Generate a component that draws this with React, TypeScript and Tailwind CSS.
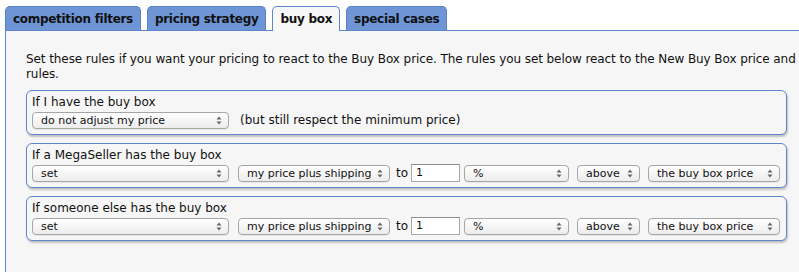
import { ReactNode } from 'react';

const font = { fontFamily: '"DejaVu Sans", Verdana, sans-serif' };

function Arrows() {
  return (
    <svg width="6" height="9" viewBox="0 0 6 9" className="shrink-0">
      <path d="M3 0.5 L5.5 3.5 L0.5 3.5 Z" fill="#666" />
      <path d="M3 8.5 L5.5 5.5 L0.5 5.5 Z" fill="#666" />
    </svg>
  );
}

function Select({ value, width }: { value: string; width: string }) {
  return (
    <div
      className={`${width} h-[17px] shrink-0 flex items-center justify-between pl-[8px] pr-[6px] rounded-[4px] border border-[#a6a6a6] bg-gradient-to-b from-white to-[#ececec] text-[11px] leading-[15px] text-[#111] shadow-[0_1px_0_rgba(0,0,0,0.06)]`}
    >
      <span>{value}</span>
      <Arrows />
    </div>
  );
}

function RuleBox({ title, children }: { title: string; children: ReactNode }) {
  return (
    <div className="w-[761px] rounded-[6px] border border-[#5f85cb] bg-[#f6f6f6] pt-[4px] pb-[5px] pl-[5px] pr-[4px] shadow-[1px_2px_2px_rgba(0,0,0,0.22)]">
      <div className="text-[12px] leading-[15px] text-[#111]">{title}</div>
      <div className="mt-[1px] h-[18px] flex items-center text-[12px] leading-[18px]">{children}</div>
    </div>
  );
}

function AdjustRow() {
  return (
    <>
      <Select value="set" width="w-[197px]" />
      <div className="ml-[9px]">
        <Select value="my price plus shipping" width="w-[152px]" />
      </div>
      <span className="ml-[6px] text-[#111]">to</span>
      <div className="ml-[3px] w-[49px] h-[18px] border border-[#a9a9a9] border-t-[#8c8c8c] bg-white text-[11px] leading-[16px] pl-[4px] text-[#111]">
        1
      </div>
      <div className="ml-[4px]">
        <Select value="%" width="w-[105px]" />
      </div>
      <div className="ml-[8px]">
        <Select value="above" width="w-[63px]" />
      </div>
      <div className="ml-[8px]">
        <Select value="the buy box price" width="w-[132px]" />
      </div>
    </>
  );
}

const tabs = ['competition filters', 'pricing strategy', 'buy box', 'special cases'];

export default function App() {
  return (
    <div className="w-[799px] h-[272px] overflow-hidden bg-white pt-[6px] pl-[5px]" style={font}>
      <div className="flex items-end gap-[6px] relative z-10">
        {tabs.map((t) => {
          const active = t === 'buy box';
          return (
            <div
              key={t}
              className={`h-[24px] px-[7px] flex items-center rounded-t-[5px] border border-b-0 text-[12px] font-bold tracking-[-0.3px] text-[#111] ${
                active
                  ? 'bg-[#f7f7f7] border-[#5f85cb] -mb-px h-[25px] pb-px'
                  : 'bg-[#6e95d6] border-[#5a7fc2]'
              }`}
            >
              {t}
            </div>
          );
        })}
      </div>
      <div className="h-[300px] border-l border-t border-[#5f85cb] bg-[#f6f6f6] pl-[20px] pt-[21px]">
        <p className="text-[12px] leading-[15px] tracking-[-0.08px] text-[#111] w-[800px]">
          Set these rules if you want your pricing to react to the Buy Box price. The rules you set below react to the New Buy Box price and
          <br />
          rules.
        </p>
        <div className="mt-[8px] flex flex-col gap-[8px]">
          <RuleBox title="If I have the buy box">
            <Select value="do not adjust my price" width="w-[197px]" />
            <span className="ml-[11px] text-[#111]">(but still respect the minimum price)</span>
          </RuleBox>
          <RuleBox title="If a MegaSeller has the buy box">
            <AdjustRow />
          </RuleBox>
          <RuleBox title="If someone else has the buy box">
            <AdjustRow />
          </RuleBox>
        </div>
      </div>
    </div>
  );
}
